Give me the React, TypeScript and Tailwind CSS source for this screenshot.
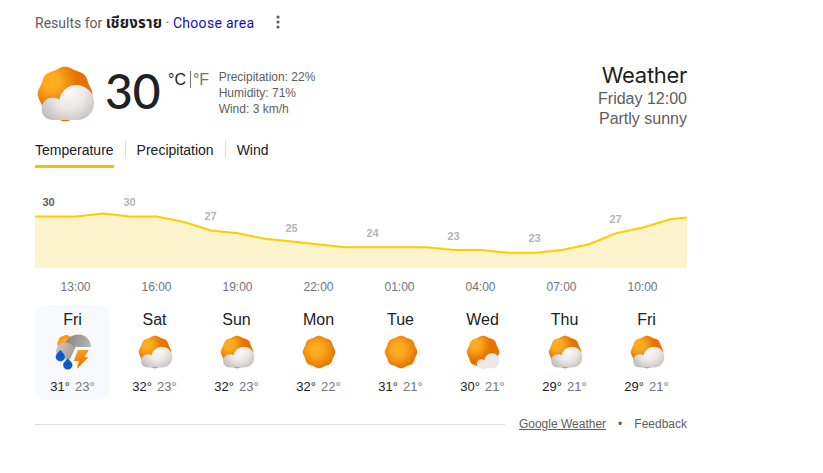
import { useId } from "react";

type IconKind = "storm" | "partly" | "sunny" | "mostly";

interface ChartPoint {
  x: number;
  y: number;
  label?: string;
}

interface Day {
  name: string;
  icon: IconKind;
  high: number;
  low: number;
}

const POINTS: ChartPoint[] = [
  { x: 0, y: 26.5 },
  { x: 14, y: 26.5, label: "30" },
  { x: 41, y: 26.5 },
  { x: 68, y: 23.5 },
  { x: 95, y: 26.5, label: "30" },
  { x: 122, y: 26.5 },
  { x: 149, y: 32 },
  { x: 176, y: 40.5, label: "27" },
  { x: 203, y: 43.3 },
  { x: 230, y: 48.7 },
  { x: 257, y: 51.5, label: "25" },
  { x: 284, y: 54.5 },
  { x: 311, y: 57.2 },
  { x: 338, y: 57.2, label: "24" },
  { x: 365, y: 57.2 },
  { x: 392, y: 57.2 },
  { x: 419, y: 60, label: "23" },
  { x: 446, y: 60 },
  { x: 473, y: 62.8 },
  { x: 500, y: 62.8, label: "23" },
  { x: 527, y: 60 },
  { x: 554, y: 54.3 },
  { x: 581, y: 43.3, label: "27" },
  { x: 608, y: 37.5 },
  { x: 635, y: 29.3 },
  { x: 652, y: 27.5 },
];

const HOURS = ["13:00", "16:00", "19:00", "22:00", "01:00", "04:00", "07:00", "10:00"];

const DAYS: Day[] = [
  { name: "Fri", icon: "storm", high: 31, low: 23 },
  { name: "Sat", icon: "partly", high: 32, low: 23 },
  { name: "Sun", icon: "partly", high: 32, low: 23 },
  { name: "Mon", icon: "sunny", high: 32, low: 22 },
  { name: "Tue", icon: "sunny", high: 31, low: 21 },
  { name: "Wed", icon: "mostly", high: 30, low: 21 },
  { name: "Thu", icon: "partly", high: 29, low: 21 },
  { name: "Fri", icon: "partly", high: 29, low: 21 },
];

// eight soft lobes, one of them pointing straight up
const sunPath = (cx: number, cy: number, r: number) => {
  const steps = 96;
  const pts = Array.from({ length: steps }, (_, i) => {
    const a = (i / steps) * Math.PI * 2;
    const radius = r * (0.97 + 0.03 * Math.cos(8 * a));
    return `${(cx + radius * Math.sin(a)).toFixed(2)} ${(cy - radius * Math.cos(a)).toFixed(2)}`;
  });
  return `M${pts.join("L")}Z`;
};

function WeatherIcon({ kind, className }: { kind: IconKind; className: string }) {
  const id = useId();
  const sun = `${id}-sun`;
  const cloud = `${id}-cloud`;
  const dark = `${id}-dark`;
  const haze = `${id}-haze`;
  const bolt = `${id}-bolt`;
  const centered = kind === "sunny";

  return (
    <svg viewBox="0 0 48 48" className={className} aria-hidden="true">
      <defs>
        <radialGradient id={sun} gradientUnits="userSpaceOnUse" cx={centered ? 21 : 14} cy={centered ? 21 : 15} r={centered ? 24 : 19}>
          <stop offset="0" stopColor="#fdb022" />
          <stop offset="0.35" stopColor="#fba91f" />
          <stop offset="1" stopColor="#e67200" />
        </radialGradient>
        <radialGradient id={cloud} gradientUnits="userSpaceOnUse" cx="27" cy="23" r="27">
          <stop offset="0" stopColor="#fbf8f6" />
          <stop offset="0.45" stopColor="#ebe8e6" />
          <stop offset="1" stopColor="#b8b6b5" />
        </radialGradient>
        <linearGradient id={dark} x1="0" y1="0" x2="1" y2="0.4">
          <stop offset="0" stopColor="#828282" />
          <stop offset="1" stopColor="#b4b4b4" />
        </linearGradient>
        <linearGradient id={haze} x1="0" y1="0" x2="1" y2="0.5">
          <stop offset="0" stopColor="#dcc5b0" />
          <stop offset="1" stopColor="#a3a09e" />
        </linearGradient>
        <linearGradient id={bolt} x1="0" y1="0" x2="0.4" y2="1">
          <stop offset="0" stopColor="#fcad20" />
          <stop offset="1" stopColor="#e66d00" />
        </linearGradient>
      </defs>

      {kind !== "storm" && <path d={sunPath(24, 24, 20.5)} fill={`url(#${sun})`} />}

      {kind === "partly" && (
        <path
          d="M15 43.5C10 43.5 6.5 40 6.5 35.3C6.5 30.5 10 26.8 14.6 26.8C16.6 26.8 18.4 27.2 19.8 28.1C21 21.8 26.2 17.3 32.6 17.3C40 17.3 45.8 23.2 45.8 30.5C45.8 37.8 40.2 43.5 32.8 43.5Z"
          fill={`url(#${cloud})`}
        />
      )}

      {kind === "mostly" && (
        <path
          d="M22 44.6C18.7 44.6 16.2 42.2 16.2 38.9C16.2 35.6 18.7 33.2 21.8 33.2C23.4 33.2 24.6 33.6 25.6 34.4C26.7 29.2 30.4 25.7 35.2 25.7C40.7 25.7 44.9 29.9 44.9 35.2C44.9 40.5 40.7 44.6 35.4 44.6Z"
          fill="#ede8e5"
        />
      )}

      {kind === "storm" && (
        <>
          <path d={sunPath(15.5, 14, 11.5)} fill={`url(#${sun})`} />
          <path d="M14.5 12.5C17.5 6.2 23.8 2 31.3 2C39.8 2 46.6 9 46.6 17.7L27 17.7L20 33L14.5 30Z" fill={`url(#${dark})`} />
          <path d="M2.8 23C2.8 16.6 7.7 11.9 14 11.9C20.2 11.9 25 16.2 25.6 20.8L20 33.2L8 33.5C5 31.5 2.8 27.5 2.8 23Z" fill={`url(#${haze})`} />
          <path d="M8 21.2C10.9 24.4 14 27.1 14 29.9A6 6 0 0 1 2 29.9C2 27.1 5.1 24.4 8 21.2Z" fill="#0b57d0" stroke="#f8f9fc" strokeWidth="0.3" />
          <path d="M17.4 31.9C20.3 35.1 23.5 37.4 23.5 40.2A6.1 6.1 0 0 1 11.3 40.2C11.3 37.4 14.5 35.1 17.4 31.9Z" fill="#0b57d0" stroke="#f8f9fc" strokeWidth="0.3" />
          <path d="M30.3 21.5H43.8L38.7 30.3H43.4L29 45.4L31.2 35.3H24.8Z" fill={`url(#${bolt})`} />
        </>
      )}
    </svg>
  );
}

function TemperatureChart() {
  const line = POINTS.map((p) => `${p.x},${p.y}`).join(" ");

  return (
    <svg width="652" height="78" viewBox="0 0 652 78" className="block">
      <polygon points={`0,78 ${line} 652,78`} fill="#fdf3cd" />
      <polyline points={line} fill="none" stroke="#fc0" strokeWidth="2" />
      {POINTS.filter((p) => p.label).map((p, i) => (
        <text
          key={p.x}
          x={p.x - 0.5}
          y={p.label === "25" ? 42 : p.y - 10.5}
          textAnchor="middle"
          className={i === 0 ? "fill-[#5f5f5f] text-[11px] font-bold" : "fill-[#b5b5b5] text-[11px] font-bold"}
        >
          {p.label}
        </text>
      ))}
    </svg>
  );
}

export default function App() {
  return (
    <div className="h-[473px] w-[823px] bg-white pl-[35px] font-['Liberation_Sans',Arial,sans-serif] text-[#202124]">
      <div className="flex h-[62px] w-[652px] items-start pt-[13px] font-[Roboto,'Noto_Sans_Thai','Noto_Sans',sans-serif] text-sm leading-5 text-[#5e5e5e]">
        <span className="whitespace-pre">
          Results for <b className="text-[15px] tracking-[0.2px] text-[#1f1f1f]">เชียงราย</b> · <a className="tracking-[0.3px] text-[#1a0dab]">Choose area</a>
        </span>
        <svg viewBox="0 0 4 14" className="ml-[22px] mt-[2px] h-[14px] w-1 fill-[#5e5e5e]">
          <circle cx="2" cy="2" r="1.6" />
          <circle cx="2" cy="7" r="1.6" />
          <circle cx="2" cy="12" r="1.6" />
        </svg>
      </div>

      <div className="flex h-[78px] w-[652px] items-start">
        <WeatherIcon kind="partly" className="-ml-[2px] h-16 w-16 shrink-0" />
        <div className="ml-2 w-[56px] font-[Lato,sans-serif] text-[48px] font-medium leading-[57px]">30</div>
        <div className="ml-[7px] flex pt-[9px] text-base leading-[18px]">
          <span>°C</span>
          <span className="ml-1 mr-0.5 h-[17px] w-px bg-[#70757a]" />
          <span className="text-[#70757a]">°F</span>
        </div>
        <div className="ml-[9.5px] pt-[7px] text-xs leading-4 text-[#5e5e5e]">
          <div>Precipitation: 22%</div>
          <div>Humidity: 71%</div>
          <div>Wind: 3 km/h</div>
        </div>
        <div className="ml-auto text-right text-base leading-5 text-[#5e5e5e]">
          <div className="font-[Inter,sans-serif] text-[22px] leading-[27px] tracking-[-0.3px] text-[#1f1f1f]">Weather</div>
          <div>Friday 12:00</div>
          <div>Partly sunny</div>
        </div>
      </div>

      <div className="flex h-[50px] items-start text-sm leading-5">
        <div className="h-7 border-b-3 border-[#fbbc04]">Temperature</div>
        <div className="ml-[11px] mt-px h-[17px] w-px bg-[#dadce0]" />
        <div className="ml-[11px]">Precipitation</div>
        <div className="ml-[11px] mt-px h-[17px] w-px bg-[#dadce0]" />
        <div className="ml-[11px]">Wind</div>
      </div>

      <TemperatureChart />

      <div className="flex h-[37px] pt-[11px] text-xs leading-4 text-[#70757a]">
        {HOURS.map((hour) => (
          <div key={hour} className="w-[81px] text-center">{hour}</div>
        ))}
      </div>

      <div className="flex gap-[7px]">
        {DAYS.map((day, i) => (
          <div
            key={i}
            className={`flex h-[95px] w-[75px] flex-col items-center rounded-xl pt-[5px] ${i === 0 ? "bg-[#f8f9fc]" : ""}`}
          >
            <div className="text-base leading-5">{day.name}</div>
            <WeatherIcon kind={day.icon} className="mt-[3px] h-[38px] w-[38px]" />
            <div className="mt-2 flex gap-[5px] text-[13px] leading-4">
              <span>{day.high}°</span>
              <span className="text-[#70757a]">{day.low}°</span>
            </div>
          </div>
        ))}
      </div>

      <div className="mt-4 flex w-[652px] items-center text-xs leading-4 text-[#5e5e5e]">
        <div className="mr-[14px] h-px flex-1 bg-[#dadce0]" />
        <a className="underline">Google Weather</a>
        <span className="mx-3">•</span>
        <a>Feedback</a>
      </div>
    </div>
  );
}
